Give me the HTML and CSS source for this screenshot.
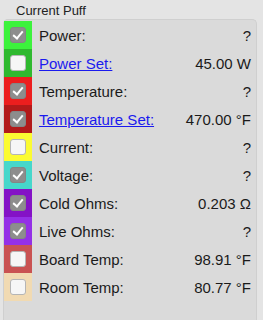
FILE: index.html
```html
<!DOCTYPE html>
<html lang="en">
<head>
    <meta charset="UTF-8">
    <title>Current Puff</title>
    <link rel="stylesheet" href="styles.css">
</head>
<body>

<div class="group">
    <div class="group-title">Current Puff</div>
    <div class="panel">
        <div class="row">
            <div class="swatch" style="background-color: #3cf23c;"><span class="check on"></span></div>
            <span class="label">Power:</span>
            <span class="value">?</span>
        </div>
        <div class="row">
            <div class="swatch" style="background-color: #2fb92f;"><span class="check"></span></div>
            <a class="label link" href="#">Power Set:</a>
            <span class="value">45.00 W</span>
        </div>
        <div class="row">
            <div class="swatch" style="background-color: #ec1e1e;"><span class="check on"></span></div>
            <span class="label">Temperature:</span>
            <span class="value">?</span>
        </div>
        <div class="row">
            <div class="swatch" style="background-color: #b21a1a;"><span class="check on"></span></div>
            <a class="label link" href="#">Temperature Set:</a>
            <span class="value">470.00 °F</span>
        </div>
        <div class="row">
            <div class="swatch" style="background-color: #fbfb32;"><span class="check"></span></div>
            <span class="label">Current:</span>
            <span class="value">?</span>
        </div>
        <div class="row">
            <div class="swatch" style="background-color: #46d7cb;"><span class="check on"></span></div>
            <span class="label">Voltage:</span>
            <span class="value">?</span>
        </div>
        <div class="row">
            <div class="swatch" style="background-color: #8412c6;"><span class="check on"></span></div>
            <span class="label">Cold Ohms:</span>
            <span class="value">0.203 Ω</span>
        </div>
        <div class="row">
            <div class="swatch" style="background-color: #9430e6;"><span class="check on"></span></div>
            <span class="label">Live Ohms:</span>
            <span class="value">?</span>
        </div>
        <div class="row">
            <div class="swatch" style="background-color: #c95252;"><span class="check"></span></div>
            <span class="label">Board Temp:</span>
            <span class="value">98.91 °F</span>
        </div>
        <div class="row">
            <div class="swatch" style="background-color: #f1dab2;"><span class="check"></span></div>
            <span class="label">Room Temp:</span>
            <span class="value">80.77 °F</span>
        </div>
    </div>
</div>

</body>
</html>
```

FILE: styles.css
```css
* {
    box-sizing: border-box;
}

body {
    margin: 0;
    background-color: #e4e4e4;
    font-family: "Liberation Sans", Arial, sans-serif;
    color: #1a1a1a;
    height: 320px;
    overflow: hidden;
}

.group {
    padding: 3px 6px 0 3px;
}

.group-title {
    font-size: 13px;
    line-height: 16px;
    padding-left: 13px;
    color: #222;
}

.panel {
    background-color: #dadada;
    border: 1px solid #cfcfcf;
    border-bottom: none;
    border-radius: 5px 5px 0 0;
    padding-top: 1px;
    height: 301px;
}

.row {
    display: flex;
    align-items: center;
    height: 28px;
}

.swatch {
    width: 28px;
    height: 28px;
    display: flex;
    align-items: center;
    justify-content: center;
    flex-shrink: 0;
}

.check {
    width: 16px;
    height: 16px;
    border-radius: 3px;
    background-color: #f6f6f6;
    border: 1px solid #b5b5b5;
    display: flex;
    align-items: center;
    justify-content: center;
}

.check.on {
    background-color: #8d8d8d;
    border-color: #858585;
}

.check.on::after {
    content: "";
    width: 4px;
    height: 8px;
    border-right: 2px solid #fff;
    border-bottom: 2px solid #fff;
    transform: rotate(40deg);
    margin-top: -2px;
}

.label {
    margin-left: 7px;
    font-size: 15px;
    color: #1a1a1a;
}

.link {
    color: #1a1aee;
    text-decoration: underline;
}

.value {
    margin-left: auto;
    margin-right: 5px;
    font-size: 15px;
}
```
